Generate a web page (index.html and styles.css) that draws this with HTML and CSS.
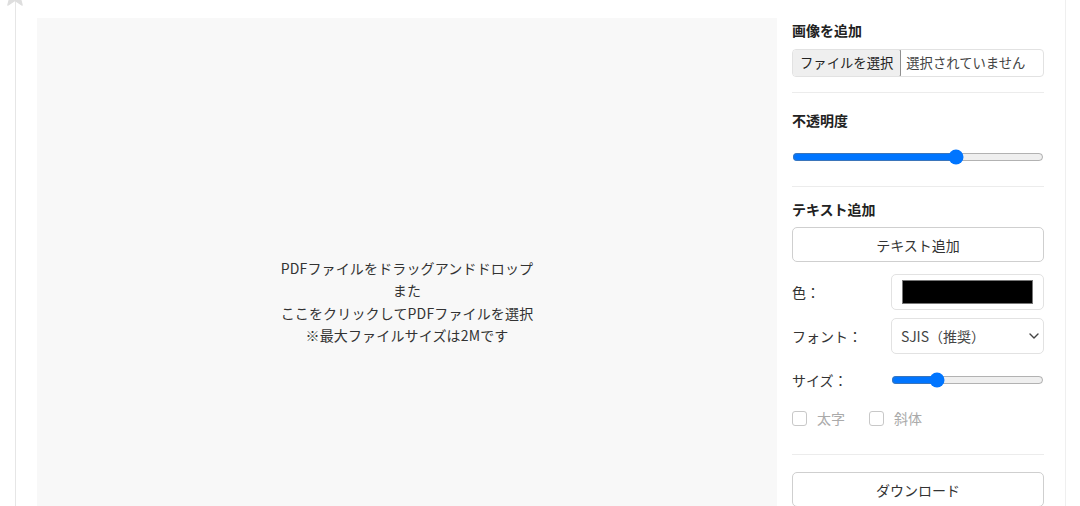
FILE: index.html
```html
<!DOCTYPE html>
<html lang="ja">
<head>
<meta charset="utf-8">
<title>PDF編集</title>
<link rel="stylesheet" href="styles.css">
</head>
<body>
<div class="frame">
  <svg class="pin" width="24" height="24" viewBox="0 0 20 20" aria-hidden="true">
    <polygon points="10,0 12.6,6.5 19.5,7 14.2,11.5 16,18.5 10,14.6 4,18.5 5.8,11.5 0.5,7 7.4,6.5" fill="#dedede" stroke="#dedede" stroke-width="1" stroke-linejoin="round"/>
  </svg>
  <div class="layout">
    <div class="dropzone">
      <p class="drop-text">PDFファイルをドラッグアンドドロップ<br>また<br>ここをクリックしてPDFファイルを選択<br>※最大ファイルサイズは2Mです</p>
    </div>
    <aside class="sidebar">
      <section class="sec sec-image">
        <h3 class="sec-title">画像を追加</h3>
        <div class="file">
          <button class="file-btn" type="button">ファイルを選択</button>
          <span class="file-name">選択されていません</span>
        </div>
      </section>
      <section class="sec sec-opacity">
        <h3 class="sec-title">不透明度</h3>
        <input class="range range-opacity" type="range" min="0" max="100" value="66">
      </section>
      <section class="sec sec-text">
        <h3 class="sec-title">テキスト追加</h3>
        <button class="btn btn-add" type="button">テキスト追加</button>
        <div class="row row-color">
          <span class="row-label">色：</span>
          <div class="color-box"><span class="swatch"></span></div>
        </div>
        <div class="row">
          <span class="row-label">フォント：</span>
          <div class="select-wrap">
            <select class="select">
              <option>SJIS（推奨）</option>
            </select>
            <svg class="chev" width="10" height="6" viewBox="0 0 10 6" aria-hidden="true"><path d="M1 1l4 4 4-4" fill="none" stroke="#444" stroke-width="1.4" stroke-linecap="round" stroke-linejoin="round"/></svg>
          </div>
        </div>
        <div class="row">
          <span class="row-label">サイズ：</span>
          <input class="range range-size" type="range" min="0" max="100" value="28">
        </div>
        <div class="checks">
          <label class="check"><input type="checkbox" disabled><span>太字</span></label>
          <label class="check"><input type="checkbox" disabled><span>斜体</span></label>
        </div>
      </section>
      <section class="sec sec-download">
        <button class="btn btn-download" type="button">ダウンロード</button>
      </section>
    </aside>
  </div>
</div>
</body>
</html>
```
FILE: styles.css
```css
* { box-sizing: border-box; }
html, body { margin: 0; padding: 0; background: #fff; overflow: hidden; }
body {
  font-family: "Noto Sans CJK JP", "Noto Sans", sans-serif;
  font-size: 14px;
  color: #333;
}
.frame {
  position: relative;
  margin-left: 15px;
  width: 1051px;
  min-height: 620px;
  border-left: 1px solid #e6e6e6;
  border-right: 1px solid #efefef;
}
.pin {
  position: absolute;
  left: -13px;
  top: -17px;
}
.layout {
  display: flex;
  gap: 15px;
  padding: 18px 21px 0 21px;
}
.dropzone {
  width: 740px;
  height: 567px;
  background: #f8f8f8;
  display: flex;
  align-items: center;
  justify-content: center;
  flex-shrink: 0;
}
.drop-text {
  margin: 0;
  text-align: center;
  line-height: 22.3px;
  color: #333;
  letter-spacing: 0.15px;
}
.sidebar {
  width: 252px;
  flex-shrink: 0;
}
.sec-title {
  margin: 0;
  font-size: 14px;
  font-weight: 700;
  line-height: 20px;
  color: #222;
}
.sec-image { padding-top: 2px; padding-bottom: 15px; border-bottom: 1px solid #ececec; }
.sec-image .sec-title { margin-bottom: 9px; }
.file {
  display: flex;
  align-items: stretch;
  height: 28px;
  border: 1px solid #e2e2e2;
  border-radius: 4px;
  overflow: hidden;
  font-size: 13.33px;
}
.file-btn {
  font: inherit;
  font-size: 13.33px;
  color: #222;
  background: #efefef;
  border: 1px solid #8f8f8f;
  border-radius: 2px;
  margin: -1px 0 -1px -1px;
  padding: 0 7px;
  line-height: 26px;
  white-space: nowrap;
}
.file-name {
  padding-left: 5px;
  line-height: 26px;
  color: #444;
  white-space: nowrap;
}
.sec-opacity { padding-top: 17px; padding-bottom: 21px; border-bottom: 1px solid #ececec; }
.range {
  display: block;
  margin: 0;
  height: 16px;
  accent-color: #0075ff;
}
.range-opacity { width: 100%; margin-top: 19px; }
.sec-text { padding-top: 12px; padding-bottom: 26px; border-bottom: 1px solid #ececec; }
.btn {
  display: block;
  width: 100%;
  height: 35px;
  font: inherit;
  font-size: 14px;
  color: #333;
  background: #fff;
  border: 1px solid #cfcfcf;
  border-radius: 5px;
}
.btn-add { margin-top: 8px; }
.row {
  display: flex;
  align-items: center;
  height: 36px;
  margin-top: 8px;
}
.row-color { margin-top: 12px; }
.row-label {
  width: 99px;
  flex-shrink: 0;
  color: #333;
}
.color-box {
  flex: 1;
  height: 36px;
  border: 1px solid #e2e2e2;
  border-radius: 5px;
  padding: 5px 10px;
}
.swatch {
  display: block;
  height: 100%;
  background: #000;
  border: 1px solid #777;
}
.select-wrap {
  position: relative;
  flex: 1;
}
.select {
  -webkit-appearance: none;
  appearance: none;
  width: 100%;
  height: 36px;
  font: inherit;
  font-size: 14px;
  color: #444;
  background: #fff;
  border: 1px solid #e2e2e2;
  border-radius: 5px;
  padding: 0 9px;
}
.chev {
  position: absolute;
  right: 5px;
  top: 15px;
}
.range-size { flex: 1; width: 153px; }
.checks {
  display: flex;
  gap: 24px;
  margin-top: 10px;
  height: 20px;
  align-items: center;
}
.check {
  display: flex;
  align-items: center;
  gap: 10px;
  color: #aaa;
}
.check input {
  -webkit-appearance: none;
  appearance: none;
  width: 15px;
  height: 15px;
  margin: 0;
  border: 1px solid #c8c8c8;
  border-radius: 3px;
  background: #fff;
}
.sec-download { padding-top: 17px; }
```
